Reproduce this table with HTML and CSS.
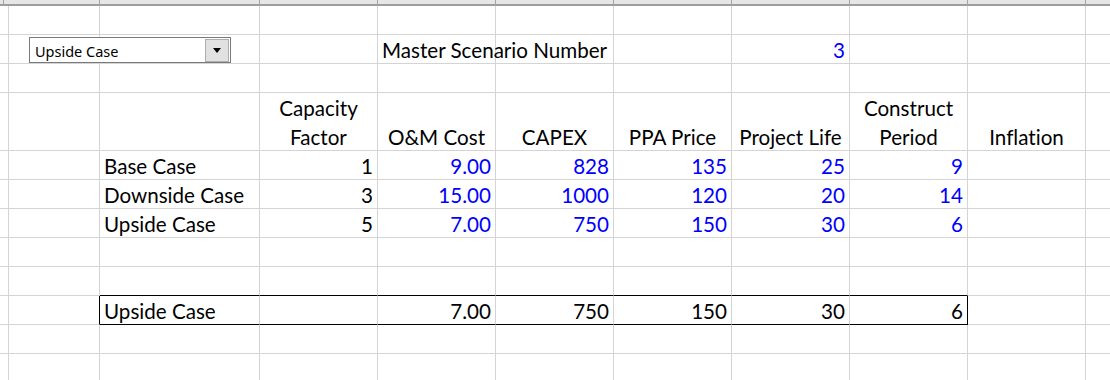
FILE: index.html
```html
<!DOCTYPE html>
<html lang="en">
<head>
<meta charset="utf-8">
<title>Scenario Selector</title>
<link rel="stylesheet" href="styles.css">
</head>
<body>
<div class="sheet">
  <!-- column header strip -->
  <div class="hd"></div><div class="hd"></div><div class="hd"></div><div class="hd"></div><div class="hd"></div><div class="hd"></div><div class="hd"></div><div class="hd"></div><div class="hd"></div><div class="hd"></div><div class="hd"></div>

  <!-- row 1 -->
  <div class="c"></div><div class="c"></div><div class="c"></div><div class="c"></div><div class="c"></div><div class="c"></div><div class="c"></div><div class="c"></div><div class="c"></div><div class="c"></div><div class="c"></div>

  <!-- row 2: master scenario -->
  <div class="c"></div><div class="c"></div><div class="c"></div><div class="c"></div>
  <div class="c txt">Master Scenario Number</div>
  <div class="c"></div><div class="c"></div>
  <div class="c num in">3</div>
  <div class="c"></div><div class="c"></div><div class="c"></div>

  <!-- row 3 -->
  <div class="c"></div><div class="c"></div><div class="c"></div><div class="c"></div><div class="c"></div><div class="c"></div><div class="c"></div><div class="c"></div><div class="c"></div><div class="c"></div><div class="c"></div>

  <!-- row 4: column titles -->
  <div class="c"></div><div class="c"></div><div class="c"></div>
  <div class="c ttl"><span class="t">Capacity<br>Factor</span></div>
  <div class="c ttl"><span class="t">O&amp;M Cost</span></div>
  <div class="c ttl"><span class="t">CAPEX</span></div>
  <div class="c ttl"><span class="t">PPA Price</span></div>
  <div class="c ttl"><span class="t">Project Life</span></div>
  <div class="c ttl"><span class="t">Construct<br>Period</span></div>
  <div class="c ttl"><span class="t">Inflation</span></div>
  <div class="c"></div>

  <!-- row 5 -->
  <div class="c"></div><div class="c"></div>
  <div class="c txt">Base Case</div>
  <div class="c num">1</div>
  <div class="c num in">9.00</div>
  <div class="c num in">828</div>
  <div class="c num in">135</div>
  <div class="c num in">25</div>
  <div class="c num in">9</div>
  <div class="c"></div><div class="c"></div>

  <!-- row 6 -->
  <div class="c"></div><div class="c"></div>
  <div class="c txt">Downside Case</div>
  <div class="c num">3</div>
  <div class="c num in">15.00</div>
  <div class="c num in">1000</div>
  <div class="c num in">120</div>
  <div class="c num in">20</div>
  <div class="c num in">14</div>
  <div class="c"></div><div class="c"></div>

  <!-- row 7 -->
  <div class="c"></div><div class="c"></div>
  <div class="c txt">Upside Case</div>
  <div class="c num">5</div>
  <div class="c num in">7.00</div>
  <div class="c num in">750</div>
  <div class="c num in">150</div>
  <div class="c num in">30</div>
  <div class="c num in">6</div>
  <div class="c"></div><div class="c"></div>

  <!-- row 8 -->
  <div class="c"></div><div class="c"></div><div class="c"></div><div class="c"></div><div class="c"></div><div class="c"></div><div class="c"></div><div class="c"></div><div class="c"></div><div class="c"></div><div class="c"></div>

  <!-- row 9: top edge of the selected-case box -->
  <div class="c"></div><div class="c"></div>
  <div class="c top"></div><div class="c top"></div><div class="c top"></div><div class="c top"></div><div class="c top"></div><div class="c top"></div><div class="c top"></div>
  <div class="c"></div><div class="c"></div>

  <!-- row 10: selected case -->
  <div class="c"></div>
  <div class="c edge-r"></div>
  <div class="c txt sel">Upside Case</div>
  <div class="c sel"></div>
  <div class="c num sel">7.00</div>
  <div class="c num sel">750</div>
  <div class="c num sel">150</div>
  <div class="c num sel">30</div>
  <div class="c num sel edge-r">6</div>
  <div class="c"></div><div class="c"></div>

  <!-- rows 11-12 -->
  <div class="c"></div><div class="c"></div><div class="c"></div><div class="c"></div><div class="c"></div><div class="c"></div><div class="c"></div><div class="c"></div><div class="c"></div><div class="c"></div><div class="c"></div>
  <div class="c"></div><div class="c"></div><div class="c"></div><div class="c"></div><div class="c"></div><div class="c"></div><div class="c"></div><div class="c"></div><div class="c"></div><div class="c"></div><div class="c"></div>

  <!-- scenario drop-down control floating over the grid -->
  <div class="combo">
    <span class="combo-text">Upside Case</span>
    <span class="combo-btn"><span class="arrow"></span></span>
  </div>
</div>
</body>
</html>
```

FILE: styles.css
```css
html, body {
  margin: 0;
  padding: 0;
  background: #ffffff;
  overflow: hidden;
}

.sheet {
  position: relative;
  display: grid;
  grid-template-columns: 4px 96px 160px repeat(8, 118px);
  grid-template-rows: 6px 29px 29px 29px 58px 29px 29px 29px 29px 29px 29px 29px 29px;
  width: 1110px;
  height: 380px;
  overflow: hidden;
  font-family: Lato, "Liberation Sans", sans-serif;
  font-size: 20.6px;
  font-variant-ligatures: none;
  color: #000000;
}

.hd {
  background: #e6e6e6;
  border-right: 1px solid #a3a3a3;
  border-bottom: 2px solid #9e9e9e;
}

.c {
  box-sizing: border-box;
  border-right: 1px solid #d4d4d4;
  border-bottom: 1px solid #d4d4d4;
  line-height: 26px;
  padding: 0 4px 0 4px;
  white-space: nowrap;
  display: flex;
  align-items: flex-end;
  min-width: 0;
}

.txt {
  justify-content: flex-start;
}

.num {
  justify-content: flex-end;
}

.ttl {
  justify-content: center;
  text-align: center;
  line-height: 29px;
}

.ttl .t {
  margin-bottom: -2px;
}

.in {
  color: #0000ff;
}

.top {
  border-bottom-color: #000000;
}

.sel {
  border-bottom-color: #000000;
}

.edge-r {
  border-right-color: #000000;
}

/* form control */
.combo {
  position: absolute;
  left: 29px;
  top: 37px;
  width: 202px;
  height: 26px;
  box-sizing: border-box;
  border: 1px solid #7a7a7a;
  background: #ffffff;
  display: flex;
  align-items: center;
  font-family: "Noto Sans", "Liberation Sans", sans-serif;
  font-size: 14.5px;
}

.combo-text {
  flex: 1;
  padding: 3px 0 0 5px;
  line-height: 21px;
}

.combo-btn {
  width: 24px;
  height: 23px;
  margin-right: 1px;
  box-sizing: border-box;
  border: 1px solid #adadad;
  background: #e1e1e1;
  display: flex;
  align-items: center;
  justify-content: center;
}

.arrow {
  width: 0;
  height: 0;
  border-left: 4px solid transparent;
  border-right: 4px solid transparent;
  border-top: 5px solid #000000;
}
```
